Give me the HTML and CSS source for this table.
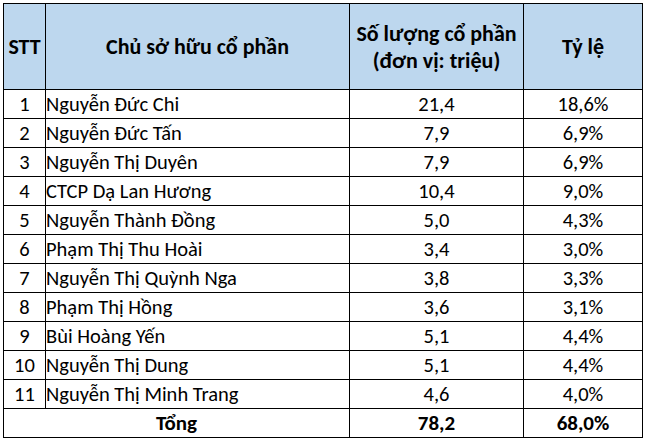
FILE: index.html
```html
<!DOCTYPE html>
<html lang="vi">
<head>
<meta charset="utf-8">
<link rel="stylesheet" href="styles.css">
</head>
<body>
<table class="tbl">
  <colgroup>
    <col class="c-stt"><col class="c-name"><col class="c-qty"><col class="c-pct">
  </colgroup>
  <thead>
    <tr class="head">
      <th>STT</th>
      <th>Chủ sở hữu cổ phần</th>
      <th>Số lượng cổ phần<br>(đơn vị: triệu)</th>
      <th>Tỷ lệ</th>
    </tr>
  </thead>
  <tbody>
    <tr><td class="stt">1</td><td class="name">Nguyễn Đức Chi</td><td class="num">21,4</td><td class="num">18,6%</td></tr>
    <tr><td class="stt">2</td><td class="name">Nguyễn Đức Tấn</td><td class="num">7,9</td><td class="num">6,9%</td></tr>
    <tr><td class="stt">3</td><td class="name">Nguyễn Thị Duyên</td><td class="num">7,9</td><td class="num">6,9%</td></tr>
    <tr><td class="stt">4</td><td class="name">CTCP Dạ Lan Hương</td><td class="num">10,4</td><td class="num">9,0%</td></tr>
    <tr><td class="stt">5</td><td class="name">Nguyễn Thành Đồng</td><td class="num">5,0</td><td class="num">4,3%</td></tr>
    <tr><td class="stt">6</td><td class="name">Phạm Thị Thu Hoài</td><td class="num">3,4</td><td class="num">3,0%</td></tr>
    <tr><td class="stt">7</td><td class="name">Nguyễn Thị Quỳnh Nga</td><td class="num">3,8</td><td class="num">3,3%</td></tr>
    <tr><td class="stt">8</td><td class="name">Phạm Thị Hồng</td><td class="num">3,6</td><td class="num">3,1%</td></tr>
    <tr><td class="stt">9</td><td class="name">Bùi Hoàng Yến</td><td class="num">5,1</td><td class="num">4,4%</td></tr>
    <tr><td class="stt">10</td><td class="name">Nguyễn Thị Dung</td><td class="num">5,1</td><td class="num">4,4%</td></tr>
    <tr><td class="stt">11</td><td class="name">Nguyễn Thị Minh Trang</td><td class="num">4,6</td><td class="num">4,0%</td></tr>
    <tr class="total"><td colspan="2">Tổng</td><td class="num">78,2</td><td class="num">68,0%</td></tr>
  </tbody>
</table>
</body>
</html>
```
FILE: styles.css
```css
html, body {
  margin: 0;
  padding: 0;
  background: #ffffff;
}
body {
  padding: 3px 0 0 3px;
  font-family: Carlito, Calibri, Lato, "Liberation Sans", sans-serif;
  font-size: 20.5px;
  color: #000;
}
.tbl {
  border-collapse: collapse;
  table-layout: fixed;
  width: 639px;
}
.c-stt { width: 42px; }
.c-name { width: 304px; }
.c-qty { width: 174px; }
.c-pct { width: 119px; }
.tbl th, .tbl td {
  border: 1px solid #000;
  padding: 0;
  line-height: 24px;
  white-space: nowrap;
  overflow: hidden;
}
.head th {
  background: #bdd7ee;
  font-weight: bold;
  font-size: 22px;
  line-height: 27px;
  height: 85px;
  text-align: center;
  vertical-align: middle;
}
.tbl td {
  height: 28px;
  vertical-align: middle;
}
.stt { text-align: center; }
.name { text-align: left; padding-left: 6px; }
.num { text-align: center; }
.total td {
  font-weight: bold;
  font-size: 21px;
  text-align: center;
}
```
